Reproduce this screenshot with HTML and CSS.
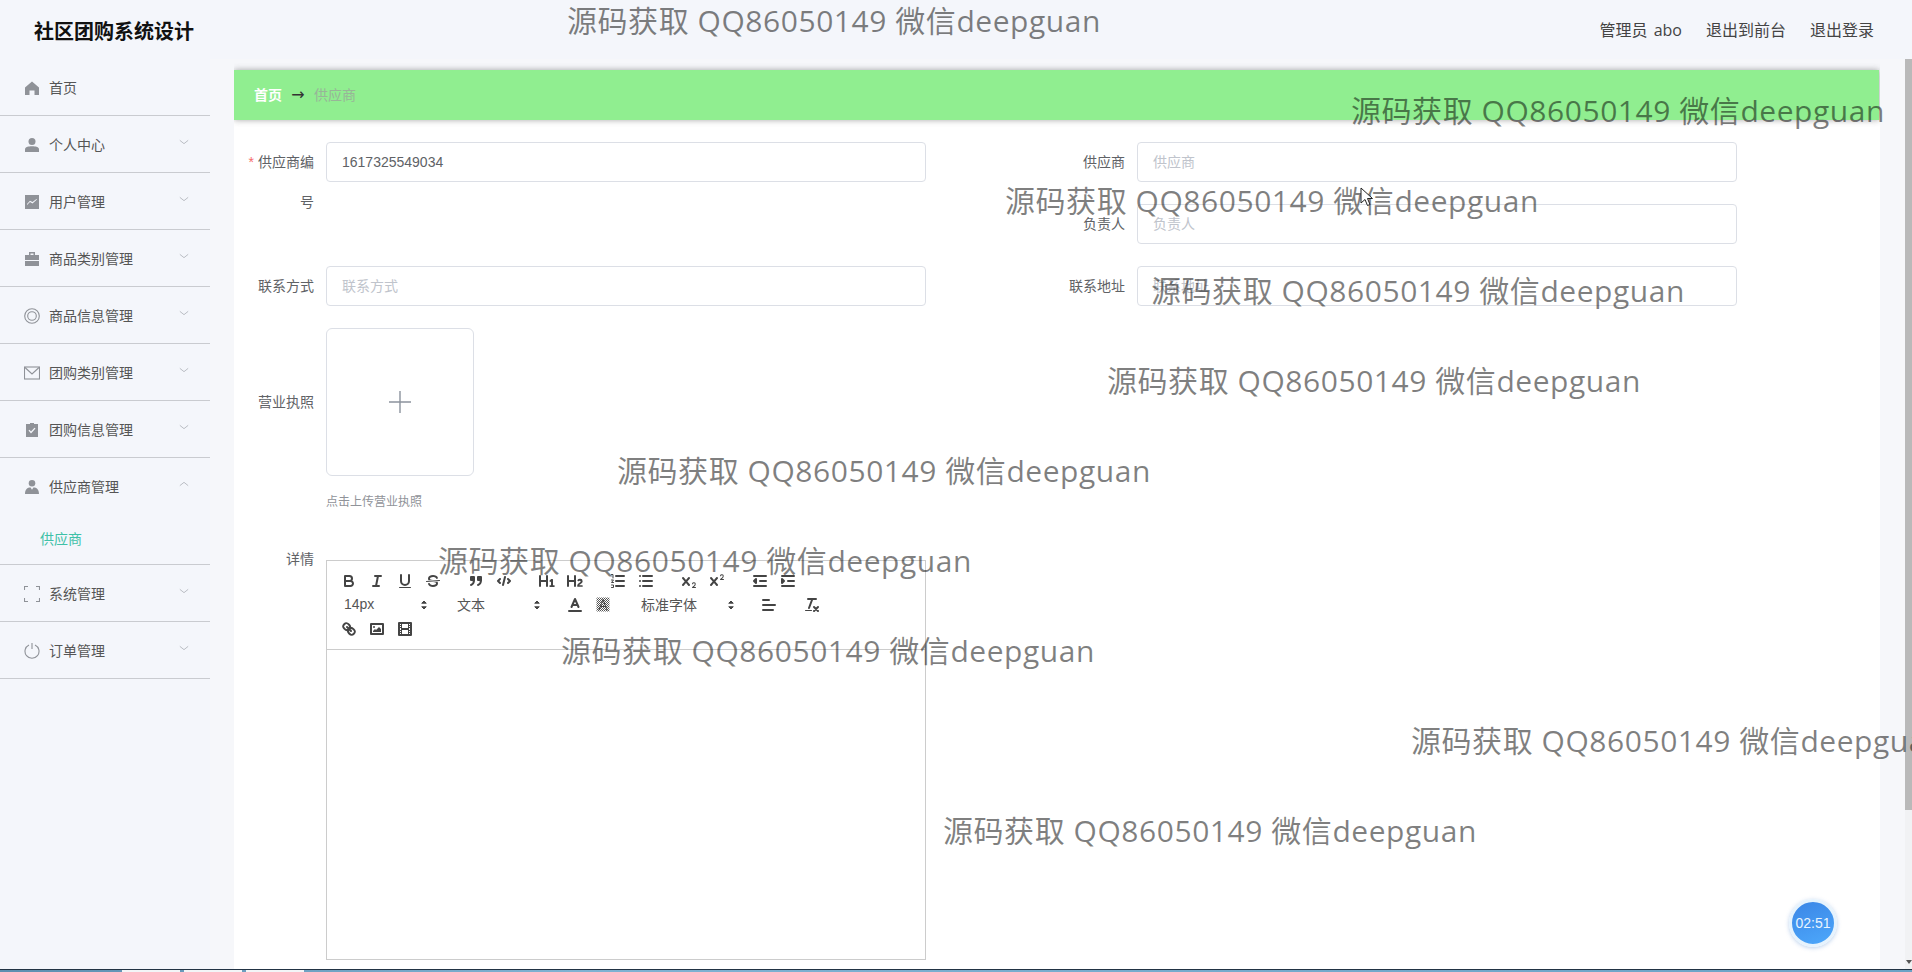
FILE: index.html
```html
<!DOCTYPE html>
<html>
	<head>
		<meta charset="UTF-8">
		<title>社区团购系统设计</title>
		<link rel="stylesheet" href="styles.css">
	</head>
	<body>
		<div class="page">
			<div class="top">
				<div class="logo">社区团购系统设计</div>
				<div class="top-links">
					<span>管理员 abo</span>
					<span>退出到前台</span>
					<span>退出登录</span>
				</div>
			</div>
			<div class="wrap">
				<ul class="menu">
					<li class="menu-item"><svg class="ico" viewBox="1 1 14 14"><path d="M8 1.500 15 7.500V15H10.500V10.500H5.500V15H1V7.500Z"/></svg>首页</li>
					<li class="menu-item"><svg class="ico" viewBox="1 1 14 14"><circle cx="8" cy="4.500" r="3.500"/><path d="M1 12.500C1 10 4 9.300 8 9.300S15 10 15 12.500V15H1Z"/></svg>个人中心<svg class="arrow" viewBox="0 0 12 12"><path d="M1 4 6 8 11 4"/></svg></li>
					<li class="menu-item"><svg class="ico" viewBox="1 1 14 14"><path fill-rule="evenodd" d="M1 1H15V15H1ZM3 11 6 8 8.500 9.500 13 5.500 12.500 5 8.500 8 6 6.800 3 10Z"/></svg>用户管理<svg class="arrow" viewBox="0 0 12 12"><path d="M1 4 6 8 11 4"/></svg></li>
					<li class="menu-item"><svg class="ico" viewBox="1 1 14 14"><path fill-rule="evenodd" d="M5 1H11V4H15V9H1V4H5ZM6.500 2.500V4H9.500V2.500ZM1 10H15V15H1Z"/></svg>商品类别管理<svg class="arrow" viewBox="0 0 12 12"><path d="M1 4 6 8 11 4"/></svg></li>
					<li class="menu-item"><svg class="ico wide line" viewBox="0 0 16 16"><circle cx="8" cy="8" r="7.300"/><circle cx="8" cy="8" r="4.300"/></svg>商品信息管理<svg class="arrow" viewBox="0 0 12 12"><path d="M1 4 6 8 11 4"/></svg></li>
					<li class="menu-item"><svg class="ico wide line" viewBox="0 0 16 16"><rect x="0.500" y="2" width="15" height="12"/><path d="M1 2.500 8 9 15 2.500"/></svg>团购类别管理<svg class="arrow" viewBox="0 0 12 12"><path d="M1 4 6 8 11 4"/></svg></li>
					<li class="menu-item"><svg class="ico" viewBox="1 1 14 14"><path fill-rule="evenodd" d="M6 0.500H10V2H14V15.500H2V2H6ZM4.500 8.500 7 11.500 11.500 6.500 10.500 5.800 7 9.500 5.500 7.800Z"/></svg>团购信息管理<svg class="arrow" viewBox="0 0 12 12"><path d="M1 4 6 8 11 4"/></svg></li>
					<li class="menu-item open">
						<div class="menu-head"><svg class="ico" viewBox="0.500 0.500 15 15"><circle cx="8" cy="4" r="3.500"/><path d="M0.500 15.500C0.500 10.500 3 8.500 6.500 8.500L8 11 9.500 8.500C13 8.500 15.500 10.500 15.500 15.500Z"/></svg>供应商管理<svg class="arrow" viewBox="0 0 12 12"><path d="M1 8 6 4 11 8"/></svg></div>
						<div class="sub-item">供应商</div>
					</li>
					<li class="menu-item"><svg class="ico wide line" viewBox="0 0 16 16"><path d="M4 0.500H0.500V4M12 0.500H15.500V4M0.500 12V15.500H4M15.500 12V15.500H12"/></svg>系统管理<svg class="arrow" viewBox="0 0 12 12"><path d="M1 4 6 8 11 4"/></svg></li>
					<li class="menu-item"><svg class="ico wide line" viewBox="0 0 16 16"><path d="M5 2A7 7 0 1 0 11 2M8 0V6"/></svg>订单管理<svg class="arrow" viewBox="0 0 12 12"><path d="M1 4 6 8 11 4"/></svg></li>
				</ul>
				<div class="main">
					<div class="crumb">
						<span class="crumb-home">首页</span>
						<span class="crumb-sep">→</span>
						<span class="crumb-now">供应商</span>
					</div>
					<div class="panel">
						<div class="form">
							<div class="field tall">
								<label class="label"><i>*</i>供应商编号</label>
								<div class="input value">1617325549034</div>
							</div>
							<div class="field">
								<label class="label">供应商</label>
								<div class="input">供应商</div>
							</div>
							<div class="field">
								<label class="label">负责人</label>
								<div class="input">负责人</div>
							</div>
							<div class="field">
								<label class="label">联系方式</label>
								<div class="input">联系方式</div>
							</div>
							<div class="field">
								<label class="label">联系地址</label>
								<div class="input">联系地址</div>
							</div>
						</div>
						<div class="field upload-row">
							<label class="label">营业执照</label>
							<div class="upload"><svg viewBox="0 0 28 28"><path d="M14 3V25M3 14H25"/></svg></div>
						</div>
						<div class="tip">点击上传营业执照</div>
						<div class="field detail-row">
							<label class="label">详情</label>
							<div class="editor">
								<div class="toolbar">
									<span class="group">
										<button><svg viewBox="0 0 18 18"><path class="st" d="M5 4H9.500A2.500 2.500 0 0 1 12 6.500A2.500 2.500 0 0 1 9.500 9H5ZM5 9H10.500A2.500 2.500 0 0 1 13 11.500A2.500 2.500 0 0 1 10.500 14H5Z"/></svg></button>
										<button><svg viewBox="0 0 18 18"><path class="st" d="M7 4H13M5 14H11M8 14 10 4"/></svg></button>
										<button><svg viewBox="0 0 18 18"><path class="st" d="M5 3V9A4 4 0 0 0 13 9V3"/><rect class="fl" x="3" y="15" width="12" height="1" rx=".5"/></svg></button>
										<button><svg viewBox="0 0 18 18"><path class="thin" d="M15.500 8.500 2.500 9.500"/><path class="fl" d="M9 8C6.500 7.800 6 7.500 6 6.500 6 5.800 7.300 5 9 5 10.600 5 11.800 5.700 12 6.300A1 1 0 0 0 13.900 5.700C13.400 4.100 11.400 3 9 3 6.200 3 4 4.500 4 6.500A3.200 3.200 0 0 0 4.500 8.300ZM9 10C11.500 10.200 12 10.500 12 11.500 12 12.200 10.700 13 9 13 7.400 13 6.200 12.300 6 11.700A1 1 0 1 0 4.100 12.300C4.600 13.900 6.600 15 9 15 11.800 15 14 13.500 14 11.500A3.200 3.200 0 0 0 13.500 9.700Z"/></svg></button>
									</span>
									<span class="group">
										<button><svg viewBox="0 0 18 18"><rect class="st fl" x="4" y="5" width="3" height="3"/><rect class="st fl" x="11" y="5" width="3" height="3"/><path class="st" d="M7 8C7 12 4 13 4 13M14 8C14 12 11 13 11 13"/></svg></button>
										<button><svg viewBox="0 0 18 18"><path class="st" d="M5 7 3 9 5 11M13 7 15 9 13 11M10 5 8 13"/></svg></button>
									</span>
									<span class="group">
										<button><svg viewBox="0 0 18 18"><path class="fl" d="M10 4V14A1 1 0 0 1 8 14V10H3V14A1 1 0 0 1 1 14V4A1 1 0 0 1 3 4V8H8V4A1 1 0 0 1 10 4ZM16.070 13.200H15V7.600C15 7.200 14.800 7 14.400 7H13.800C13.500 7 13.200 7.100 13 7.300L11.600 8.600C11.400 8.800 11.400 9.200 11.600 9.400L11.900 9.700C12.200 10 12.500 10 12.800 9.800L13 9.400V13.200H12C11.600 13.200 11.400 13.400 11.400 13.800V14.300C11.400 14.700 11.600 14.900 12 14.900H16.100C16.500 14.900 16.700 14.700 16.700 14.300V13.800C16.700 13.400 16.500 13.200 16.070 13.200Z"/></svg></button>
										<button><svg viewBox="0 0 18 18"><path class="fl" d="M16.740 13.810V14.250C16.740 14.650 16.530 14.860 16.130 14.860H11.860C11.450 14.860 11.210 14.640 11.210 14.250V14.010C11.210 11.110 14.600 10.590 14.600 9.460A.78.78 0 0 0 13.760 8.680 1.180 1.180 0 0 0 12.920 9.060C12.650 9.330 12.360 9.440 12.060 9.190L11.630 8.850C11.330 8.610 11.250 8.340 11.480 8.040A2.970 2.970 0 0 1 13.940 6.860 2.450 2.450 0 0 1 16.620 9.270C16.620 11.720 13.440 12.200 13.340 13.210H16.130C16.530 13.210 16.740 13.410 16.740 13.810ZM9 3A1 1 0 0 0 8 4V8H3V4A1 1 0 0 0 1 4V14A1 1 0 0 0 3 14V10H8V14A1 1 0 0 0 10 14V4A1 1 0 0 0 9 3Z"/></svg></button>
									</span>
									<span class="group">
										<button><svg viewBox="0 0 18 18"><path class="st" d="M7 4H15M7 9H15M7 14H15"/><path class="thin" d="M2.500 2.500H4V6M2.500 8H4.500L2.500 10.500H4.500M2.500 13H4.500V15.500H2.500"/></svg></button>
										<button><svg viewBox="0 0 18 18"><path class="st" d="M6 4H15M6 9H15M6 14H15M3 4H3M3 9H3M3 14H3"/></svg></button>
									</span>
									<span class="group">
										<button><svg viewBox="0 0 18 18"><path class="fl" d="M15.500 15H13.860A3.860 3.860 0 0 0 15.780 12.030 1.800 1.800 0 0 0 14.180 10.270 1.920 1.920 0 0 0 12.020 11.700 .5 .5 0 1 0 12.980 11.990 .91 .91 0 0 1 14.030 11.270 .81 .81 0 0 1 14.780 12.030C14.780 13.110 13.610 13.900 12.840 14.460A1.460 1.460 0 0 0 12 15.500 .5 .5 0 0 0 12.500 16H15.500A.5 .5 0 0 0 15.500 15ZM9.650 5.240A1 1 0 0 0 8.240 5.350L6 7.960 3.760 5.350A1 1 0 0 0 2.240 6.650L4.680 9.500 2.240 12.350A1 1 0 0 0 3.750 13.670L6 11.040 8.240 13.650A1 1 0 1 0 9.760 12.350L7.320 9.500 9.760 6.650A1 1 0 0 0 9.650 5.240Z"/></svg></button>
										<button><svg viewBox="0 0 18 18"><path class="fl" d="M15.500 7H13.860A4.020 4.020 0 0 0 15.780 4.030 1.800 1.800 0 0 0 14.180 2.270 1.920 1.920 0 0 0 12.020 3.700 .5 .5 0 1 0 12.980 3.990 .92 .92 0 0 1 14.030 3.270 .81 .81 0 0 1 14.780 4.030C14.780 5.110 13.610 5.950 12.840 6.520A1.420 1.420 0 0 0 12 7.500 .5 .5 0 0 0 12.500 8H15.500A.5 .5 0 0 0 15.500 7ZM9.650 5.240A1 1 0 0 0 8.240 5.350L6 7.960 3.760 5.350A1 1 0 0 0 2.240 6.650L4.680 9.500 2.240 12.350A1 1 0 0 0 3.750 13.670L6 11.040 8.240 13.650A1 1 0 1 0 9.760 12.350L7.320 9.500 9.760 6.650A1 1 0 0 0 9.650 5.240Z"/></svg></button>
									</span>
									<span class="group">
										<button><svg viewBox="0 0 18 18"><path class="st" d="M3 14H15M3 4H15M9 9H15"/><path class="fl st" d="M5 7V11L3 9Z"/></svg></button>
										<button><svg viewBox="0 0 18 18"><path class="st" d="M3 14H15M3 4H15M9 9H15"/><path class="fl st" d="M3 7V11L5 9Z"/></svg></button>
									</span>
									<span class="group">
										<span class="picker"><span>14px</span><svg viewBox="0 0 18 18"><path class="fl" d="M7 11 9 13 11 11ZM7 7 9 5 11 7Z"/><path class="thin" d="M7 11 9 13 11 11ZM7 7 9 5 11 7Z"/></svg></span>
									</span>
									<span class="group">
										<span class="picker"><span>文本</span><svg viewBox="0 0 18 18"><path class="fl" d="M7 11 9 13 11 11ZM7 7 9 5 11 7Z"/><path class="thin" d="M7 11 9 13 11 11ZM7 7 9 5 11 7Z"/></svg></span>
									</span>
									<span class="group">
										<button><svg viewBox="0 0 18 18"><path class="st" d="M3 15H15M5.500 11 9 3 12.500 11M11.630 9H6.380"/></svg></button>
										<button><svg viewBox="0 0 18 18"><defs><pattern id="hatch" width="2" height="2" patternUnits="userSpaceOnUse"><rect width="1" height="1" fill="#555"/><rect x="1" y="1" width="1" height="1" fill="#555"/></pattern></defs><rect x="2.500" y="1.500" width="13" height="14" fill="url(#hatch)"/><path class="thin" d="M5 14 9 3.500 13 14M11.500 10.500H6.500"/></svg></button>
									</span>
									<span class="group">
										<span class="picker font"><span>标准字体</span><svg viewBox="0 0 18 18"><path class="fl" d="M7 11 9 13 11 11ZM7 7 9 5 11 7Z"/><path class="thin" d="M7 11 9 13 11 11ZM7 7 9 5 11 7Z"/></svg></span>
									</span>
									<span class="group">
										<button><svg viewBox="0 0 18 18"><path class="st" d="M3 9H15M3 14H13M3 4H9"/></svg></button>
									</span>
									<span class="group">
										<button><svg viewBox="0 0 18 18"><path class="st" d="M5 3H13M6 12 9.350 3M11 11 15 15M15 11 11 15"/><rect class="fl" x="2" y="14" width="7" height="1" rx=".5"/></svg></button>
									</span>
									<span class="group">
										<button><svg viewBox="0 0 18 18"><path class="st" d="M7 7 11 11M8.900 4.580A3.480 3.480 0 0 1 9.260 9.260 3.480 3.480 0 0 1 4.580 8.900C3.190 7.500 2.040 6.400 4.220 4.220S7.500 3.190 8.900 4.580ZM13.420 9.100A3.480 3.480 0 0 0 8.740 8.740 3.480 3.480 0 0 0 9.100 13.420C10.500 14.810 11.600 15.960 13.780 13.780S14.810 10.500 13.420 9.100Z"/></svg></button>
										<button><svg viewBox="0 0 18 18"><rect class="st" x="3" y="4" width="12" height="10"/><circle class="fl" cx="6" cy="7" r="1"/><path class="fl" d="M5 12V11L7 9 8 10 11 7 13 9V12Z"/></svg></button>
										<button><svg viewBox="0 0 18 18"><rect class="st" x="3" y="3" width="12" height="12"/><path class="fl" d="M5 3H6V8H12V3H13V15H12V10H6V15H5ZM3 5H5V6H3ZM3 7H5V8H3ZM3 10H5V11H3ZM3 12H5V13H3ZM13 5H15V6H13ZM13 7H15V8H13ZM13 10H15V11H13ZM13 12H15V13H13Z"/></svg></button>
									</span>
								</div>
								<div class="editor-body"></div>
							</div>
						</div>
					</div>
				</div>
				<div class="scroll">
					<div class="thumb"></div>
					<div class="scroll-end"></div>
				</div>
			</div>
			<div class="taskbar"><span></span><span></span><span></span></div>
		</div>
		<div class="mark mark1">源码获取 QQ86050149 微信deepguan</div>
		<div class="mark mark2">源码获取 QQ86050149 微信deepguan</div>
		<div class="mark mark3">源码获取 QQ86050149 微信deepguan</div>
		<div class="mark mark4">源码获取 QQ86050149 微信deepguan</div>
		<div class="mark mark5">源码获取 QQ86050149 微信deepguan</div>
		<div class="mark mark6">源码获取 QQ86050149 微信deepguan</div>
		<div class="mark mark7">源码获取 QQ86050149 微信deepguan</div>
		<div class="mark mark8">源码获取 QQ86050149 微信deepguan</div>
		<div class="mark mark9">源码获取 QQ86050149 微信deepguan</div>
		<div class="mark mark10">源码获取 QQ86050149 微信deepguan</div>
		<svg class="cursor" viewBox="0 0 14 20"><path d="M1 1V16L5 12.500 7.500 18.500 10 17.500 7.500 11.500H12.500Z"/></svg>
		<div class="timer">02:51</div>
	</body>
</html>
```

FILE: styles.css
```css
*{
	margin: 0;
	padding: 0;
	box-sizing: border-box;
}
li{
	list-style: none;
}
html,body{
	height: 100%;
	overflow: hidden;
}
body{
	font-family: "Liberation Sans","Noto Sans CJK SC",sans-serif;
	font-size: 14px;
	color: #606266;
	background: #f4f6fb;
}
.page{
	height: 972px;
	display: flex;
	flex-direction: column;
	overflow: hidden;
}

/* top bar */
.top{
	height: 59px;
	flex: none;
	display: flex;
	justify-content: space-between;
	align-items: center;
	padding: 2px 38px 0 34px;
}
.logo{
	font-size: 20px;
	font-weight: 700;
	color: #111;
}
.top-links{
	display: flex;
	gap: 24px;
	padding-bottom: 3px;
	font-family: "Open Sans","Noto Sans CJK SC",sans-serif;
	font-size: 16px;
	word-spacing: 2px;
	color: #444;
}

/* left menu */
.wrap{
	flex: 1;
	display: flex;
	min-height: 0;
	background: #f6f7fa;
}
.menu{
	width: 210px;
	flex: none;
	color: #555;
	background: #f4f6fb;
}
.menu-item,.menu-head{
	height: 57px;
	display: flex;
	align-items: center;
	padding-left: 25px;
	position: relative;
}
.menu-item{
	border-bottom: 1px solid #c9cbd0;
}
.menu-item.open{
	height: 107px;
	display: block;
	padding-left: 0;
}
.menu-head{
	height: 56px;
	padding-left: 25px;
}
.sub-item{
	height: 50px;
	padding: 13px 0 0 40px;
	line-height: 24px;
	color: #3fc1a8;
}
.ico{
	width: 14px;
	height: 14px;
	margin: 2px 10px 0 0;
	fill: #8f9298;
	flex: none;
}
.ico.wide{
	width: 16px;
	height: 16px;
	margin: 2px 9px 0 -1px;
}
.ico.line{
	fill: none;
	stroke: #8f9298;
	stroke-width: 1.1;
}
.arrow{
	position: absolute;
	right: 21px;
	top: 21px;
	width: 10px;
	height: 10px;
	fill: none;
	stroke: #b5b8be;
	stroke-width: 1.1;
}

/* content */
.main{
	width: 1646px;
	margin-left: 24px;
	flex: none;
	padding-top: 11px;
	overflow: hidden;
}
.crumb{
	height: 50px;
	display: flex;
	align-items: center;
	gap: 8px;
	padding: 0 0 2px 20px;
	background: #90ee90;
	box-shadow: 0 0 6px rgba(60,60,60,.45);
	position: relative;
	margin: 0 1px 0 0;
}
.crumb-home{
	color: #fff;
	font-weight: 700;
}
.crumb-sep{
	width: 16px;
	font-family: "DejaVu Sans",sans-serif;
	font-size: 16px;
	color: #333;
	text-align: center;
}
.crumb-now{
	color: #98b598;
}
.panel{
	height: 900px;
	padding-top: 22px;
	background: #fff;
}
.form{
	display: grid;
	grid-template-columns: 811px 811px;
	grid-template-rows: 40px 40px 40px;
	gap: 22px 0;
	padding-left: 12px;
	margin-bottom: 22px;
}
.field{
	display: flex;
}
.tall{
	grid-row: span 2;
}
.label{
	width: 80px;
	flex: none;
	padding-right: 12px;
	text-align: right;
	line-height: 40px;
}
.label i{
	color: #f56c6c;
	font-style: normal;
	margin-right: 4px;
}
.input{
	width: 600px;
	height: 40px;
	border: 1px solid #dcdfe6;
	border-radius: 4px;
	padding: 0 15px;
	line-height: 38px;
	color: #c0c4cc;
}
.input.value{
	color: #606266;
}
.upload-row{
	padding-left: 12px;
}
.upload-row .label{
	line-height: 148px;
}
.upload{
	width: 148px;
	height: 148px;
	border: 1px solid #dcdfe6;
	border-radius: 6px;
	display: flex;
	align-items: center;
	justify-content: center;
}
.upload svg{
	width: 28px;
	height: 28px;
	fill: none;
	stroke: #8c939d;
	stroke-width: 1.4;
}
.tip{
	height: 50px;
	margin: 0 0 13px 92px;
	line-height: 52px;
	font-size: 12px;
	color: #909399;
}
.detail-row{
	padding-left: 12px;
}
.editor{
	width: 600px;
	height: 400px;
	margin-top: 21px;
	border: 1px solid #ccc;
	display: flex;
	flex-direction: column;
}
.toolbar{
	padding: 8px;
	display: flex;
	flex-wrap: wrap;
	border-bottom: 1px solid #ccc;
}
.group{
	display: flex;
	margin-right: 15px;
}
.toolbar button{
	width: 28px;
	height: 24px;
	padding: 3px 5px;
	border: 0;
	background: none;
}
.toolbar svg{
	width: 18px;
	height: 18px;
	display: block;
}
.st{
	fill: none;
	stroke: #444;
	stroke-width: 2;
	stroke-linecap: round;
	stroke-linejoin: round;
}
.thin{
	fill: none;
	stroke: #444;
	stroke-width: 1;
	stroke-linecap: round;
	stroke-linejoin: round;
}
.fl{
	fill: #444;
}
.picker{
	width: 98px;
	height: 24px;
	padding-left: 9px;
	display: flex;
	justify-content: space-between;
	align-items: center;
	color: #555;
}
.picker span{
	margin-top: -2px;
}
.picker.font{
	width: 108px;
}

/* page scrollbar */
.scroll{
	width: 7px;
	margin-left: 25px;
	flex: none;
	display: flex;
	flex-direction: column;
	background: #f1f2f4;
}
.thumb{
	height: 751px;
	background: #b9b9b9;
}
.scroll-end{
	width: 0;
	height: 0;
	margin: auto 0 5px 1px;
	border-left: 3px solid transparent;
	border-right: 3px solid transparent;
	border-top: 4px solid #555;
}

/* window strip along the bottom */
.taskbar{
	height: 3px;
	flex: none;
	display: flex;
	gap: 4px;
	padding-left: 122px;
	background: linear-gradient(90deg,#5d8fb0,#7fb2d2 30%,#6ba3c6);
	border-top: 1px solid #234;
}
.taskbar span{
	width: 58px;
	background: #f2f5f7;
}

/* things lying over the page */
.mark{
	position: absolute;
	white-space: nowrap;
	font-family: "Open Sans","Noto Sans CJK SC",sans-serif;
	font-size: 30px;
	letter-spacing: .55px;
	line-height: 40px;
	color: rgba(0,0,0,.5);
}
.mark1{ left: 567px; top: 1px; }
.mark2{ left: 1351px; top: 91px; }
.mark3{ left: 1005px; top: 181px; }
.mark4{ left: 1151px; top: 271px; }
.mark5{ left: 1107px; top: 361px; }
.mark6{ left: 617px; top: 451px; }
.mark7{ left: 438px; top: 541px; }
.mark8{ left: 561px; top: 631px; }
.mark9{ left: 1411px; top: 721px; }
.mark10{ left: 943px; top: 811px; }
.cursor{
	position: absolute;
	left: 1360px;
	top: 187px;
	width: 14px;
	height: 20px;
	fill: #fff;
	stroke: #222;
	stroke-width: 1;
	z-index: 2;
}
.timer{
	position: absolute;
	left: 1789px;
	top: 899px;
	width: 48px;
	height: 48px;
	border-radius: 50%;
	border: 3px solid #e6f3fd;
	background: linear-gradient(160deg,#3b86e6,#4da8fb);
	box-shadow: 0 1px 4px rgba(60,120,200,.35);
	color: #e8f4ff;
	text-align: center;
	line-height: 42px;
	font-size: 14px;
}
```
